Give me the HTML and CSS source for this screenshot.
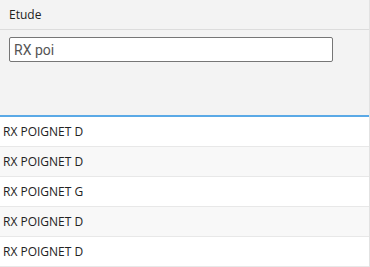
FILE: index.html
```html
<!DOCTYPE html>
<html lang="fr">
<head>
  <meta charset="UTF-8">
  <title>Etude</title>
  <link rel="stylesheet" href="styles.css">
</head>
<body>

  <div class="panel">
    <div class="panel-head">Etude</div>

    <div class="filter">
      <input class="filter-input" type="text" value="RX poi">
    </div>

    <ul class="results">
      <li class="row">RX POIGNET D</li>
      <li class="row">RX POIGNET D</li>
      <li class="row">RX POIGNET G</li>
      <li class="row">RX POIGNET D</li>
      <li class="row">RX POIGNET D</li>
    </ul>
  </div>

</body>
</html>
```

FILE: styles.css
```css
body { margin: 0; font-family: "Open Sans", "Noto Sans", sans-serif; background: #fff; }
.panel { width: 369px; border-right: 1px solid #e2e2e2; }
.panel-head { height: 29px; line-height: 29px; padding-left: 9px; font-size: 12px; color: #222; background: #f3f3f3; border-bottom: 1px solid #dcdcdc; }
.filter { height: 78px; padding: 7px 0 0 9px; background: #f3f3f3; border-bottom: 2px solid #5aa9e6; }
.filter-input { box-sizing: border-box; width: 324px; height: 25px; margin: 0; padding: 0 4px; border: 1px solid #767676; border-radius: 2px; font-family: Roboto, sans-serif; font-size: 14px; color: #555; background: #fff; outline: none; }
.results { list-style: none; margin: 0; padding: 0; }
.row { height: 29px; line-height: 29px; padding-left: 3px; font-size: 12px; color: #222; border-bottom: 1px solid #e8e8e8; background: #fff; }
.row:nth-child(even) { background: #f8f8f8; }
```
